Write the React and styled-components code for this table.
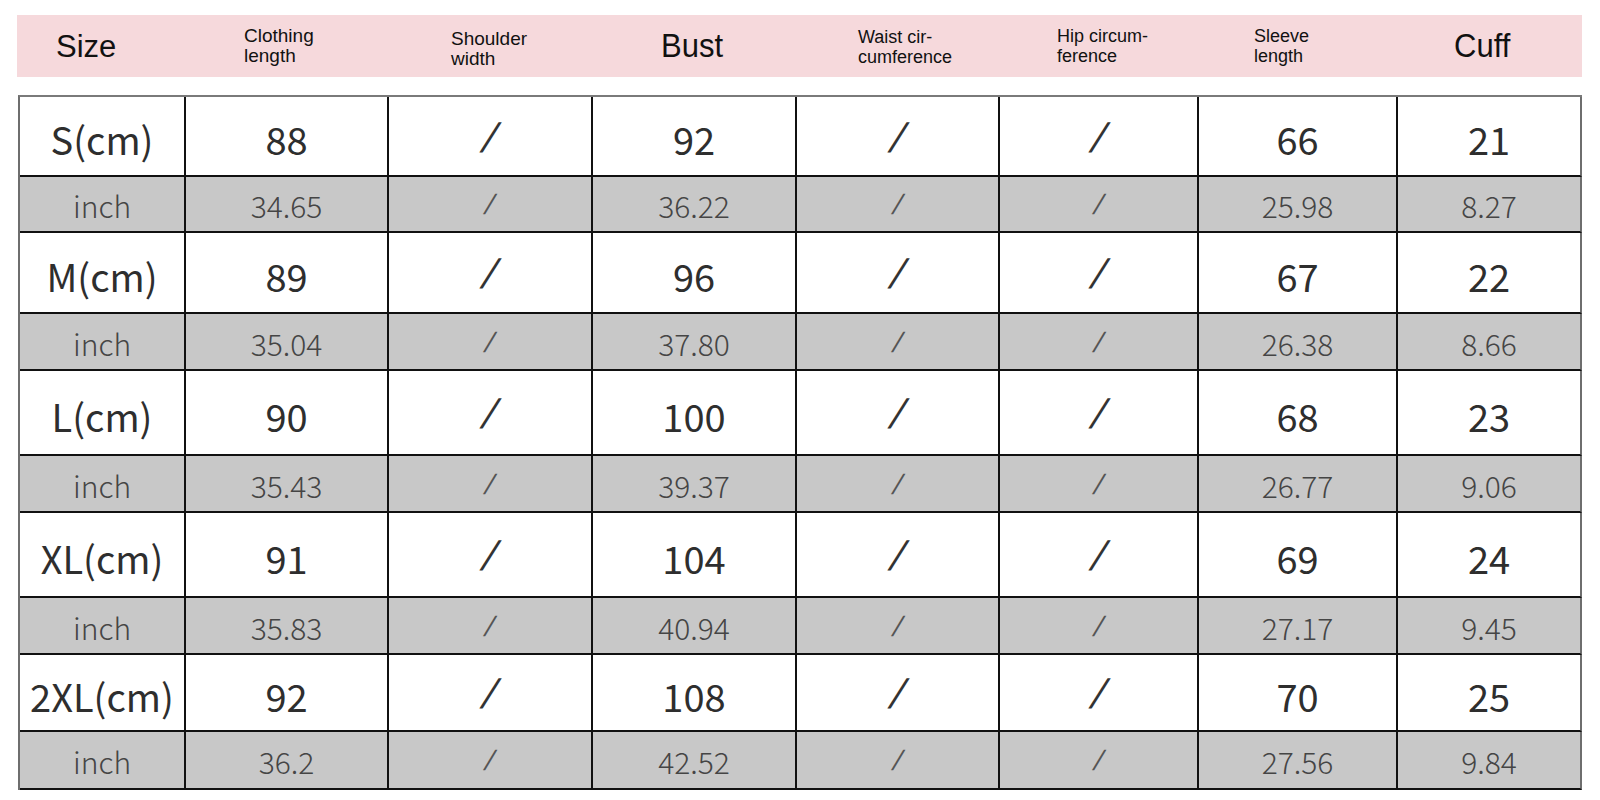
import React from "react";
import styled, { createGlobalStyle } from "styled-components";

const Global = createGlobalStyle`
  html, body { margin: 0; padding: 0; background: #ffffff; }
  body { width: 1600px; height: 800px; overflow: hidden; }
`;

const COLS = "166px 203px 204px 204px 203px 199px 199px 184px";

const Page = styled.div`
  display: flex;
  flex-direction: column;
  padding: 15px 0 0 17px;
  gap: 18px;
  width: 1600px;
  box-sizing: border-box;
  font-family: "Liberation Sans", Arial, sans-serif;
`;

const HeaderBar = styled.div`
  display: grid;
  grid-template-columns: 167px ${COLS.split(" ").slice(1).join(" ")};
  width: 1565px;
  height: 62px;
  background: #f6d9dc;
  box-sizing: border-box;
`;

const HeaderCell = styled.div`
  display: flex;
  align-items: center;
  padding-left: ${(p) => p.$indent}px;
  padding-top: ${(p) => p.$drop || 0}px;
  color: #111;
`;

const BigLabel = styled.span`
  font-size: 31px;
  line-height: 34px;
  display: inline-block;
  transform: ${(p) => (p.$tall ? "scaleY(1.1)" : "none")};
`;

const SmallLabel = styled.span`
  font-size: ${(p) => (p.$tall ? "18px" : "19px")};
  line-height: 20px;
  display: inline-block;
`;

const Grid = styled.div`
  display: grid;
  grid-template-columns: ${COLS};
  grid-template-rows: 80px 56px 81px 57px 85px 57px 85px 57px 77px 58px;
  width: 1564px;
  margin-left: 1px;
  border-left: 2px solid #6e6e6e;
  border-top: 2px solid #7a7a7a;
  box-sizing: border-box;
  font-family: "Noto Sans CJK SC", "Noto Sans", sans-serif;
`;

const Cell = styled.div`
  display: flex;
  align-items: center;
  justify-content: center;
  border-right: 2px solid ${(p) => (p.$last ? "#6e6e6e" : "#111")};
  border-bottom: 2px solid #111;
  background: ${(p) => (p.$inch ? "#c8c8c8" : "#ffffff")};
  color: ${(p) => (p.$inch ? "#454545" : "#2e2e2e")};
  font-size: ${(p) => (p.$inch ? "30px" : "38px")};
  font-weight: ${(p) => (p.$inch ? 300 : 400)};
  line-height: 1;
  padding-top: ${(p) => (p.$inch ? "2px" : "6px")};
  box-sizing: border-box;
  white-space: nowrap;
`;

const Slash = styled.span`
  display: inline-block;
  font-family: "Liberation Sans", Arial, sans-serif;
  font-size: ${(p) => (p.$inch ? "28px" : "41px")};
  color: ${(p) => (p.$inch ? "#555" : "#333")};
  transform: ${(p) => (p.$inch ? "skewX(-18deg)" : "skewX(-20deg) translateY(-1px)")};
`;

const headers = [
  { big: "Size", indent: 39, drop: 2 },
  { small: ["Clothing", "length"], indent: 60 },
  { small: ["Shoulder", "width"], indent: 64, drop: 6 },
  { big: "Bust", indent: 70, tall: true },
  { small: ["Waist cir-", "cumference"], indent: 63, tall: true, drop: 2 },
  { small: ["Hip circum-", "ference"], indent: 59, tall: true },
  { small: ["Sleeve", "length"], indent: 57, tall: true },
  { big: "Cuff", indent: 58, tall: true },
];

const rows = [
  ["S(cm)", "88", "/", "92", "/", "/", "66", "21"],
  ["inch", "34.65", "/", "36.22", "/", "/", "25.98", "8.27"],
  ["M(cm)", "89", "/", "96", "/", "/", "67", "22"],
  ["inch", "35.04", "/", "37.80", "/", "/", "26.38", "8.66"],
  ["L(cm)", "90", "/", "100", "/", "/", "68", "23"],
  ["inch", "35.43", "/", "39.37", "/", "/", "26.77", "9.06"],
  ["XL(cm)", "91", "/", "104", "/", "/", "69", "24"],
  ["inch", "35.83", "/", "40.94", "/", "/", "27.17", "9.45"],
  ["2XL(cm)", "92", "/", "108", "/", "/", "70", "25"],
  ["inch", "36.2", "/", "42.52", "/", "/", "27.56", "9.84"],
];

export default function App() {
  return (
    <>
      <Global />
      <Page>
        <HeaderBar>
          {headers.map((h, i) => (
            <HeaderCell key={i} $indent={h.indent} $drop={h.drop}>
              {h.big ? (
                <BigLabel $tall={h.tall}>{h.big}</BigLabel>
              ) : (
                <SmallLabel $tall={h.tall}>
                  {h.small[0]}
                  <br />
                  {h.small[1]}
                </SmallLabel>
              )}
            </HeaderCell>
          ))}
        </HeaderBar>
        <Grid>
          {rows.map((r, ri) =>
            r.map((v, ci) => {
              const inch = ri % 2 === 1;
              return (
                <Cell key={`${ri}-${ci}`} $inch={inch} $last={ci === 7}>
                  {v === "/" ? <Slash $inch={inch}>/</Slash> : v}
                </Cell>
              );
            })
          )}
        </Grid>
      </Page>
    </>
  );
}
